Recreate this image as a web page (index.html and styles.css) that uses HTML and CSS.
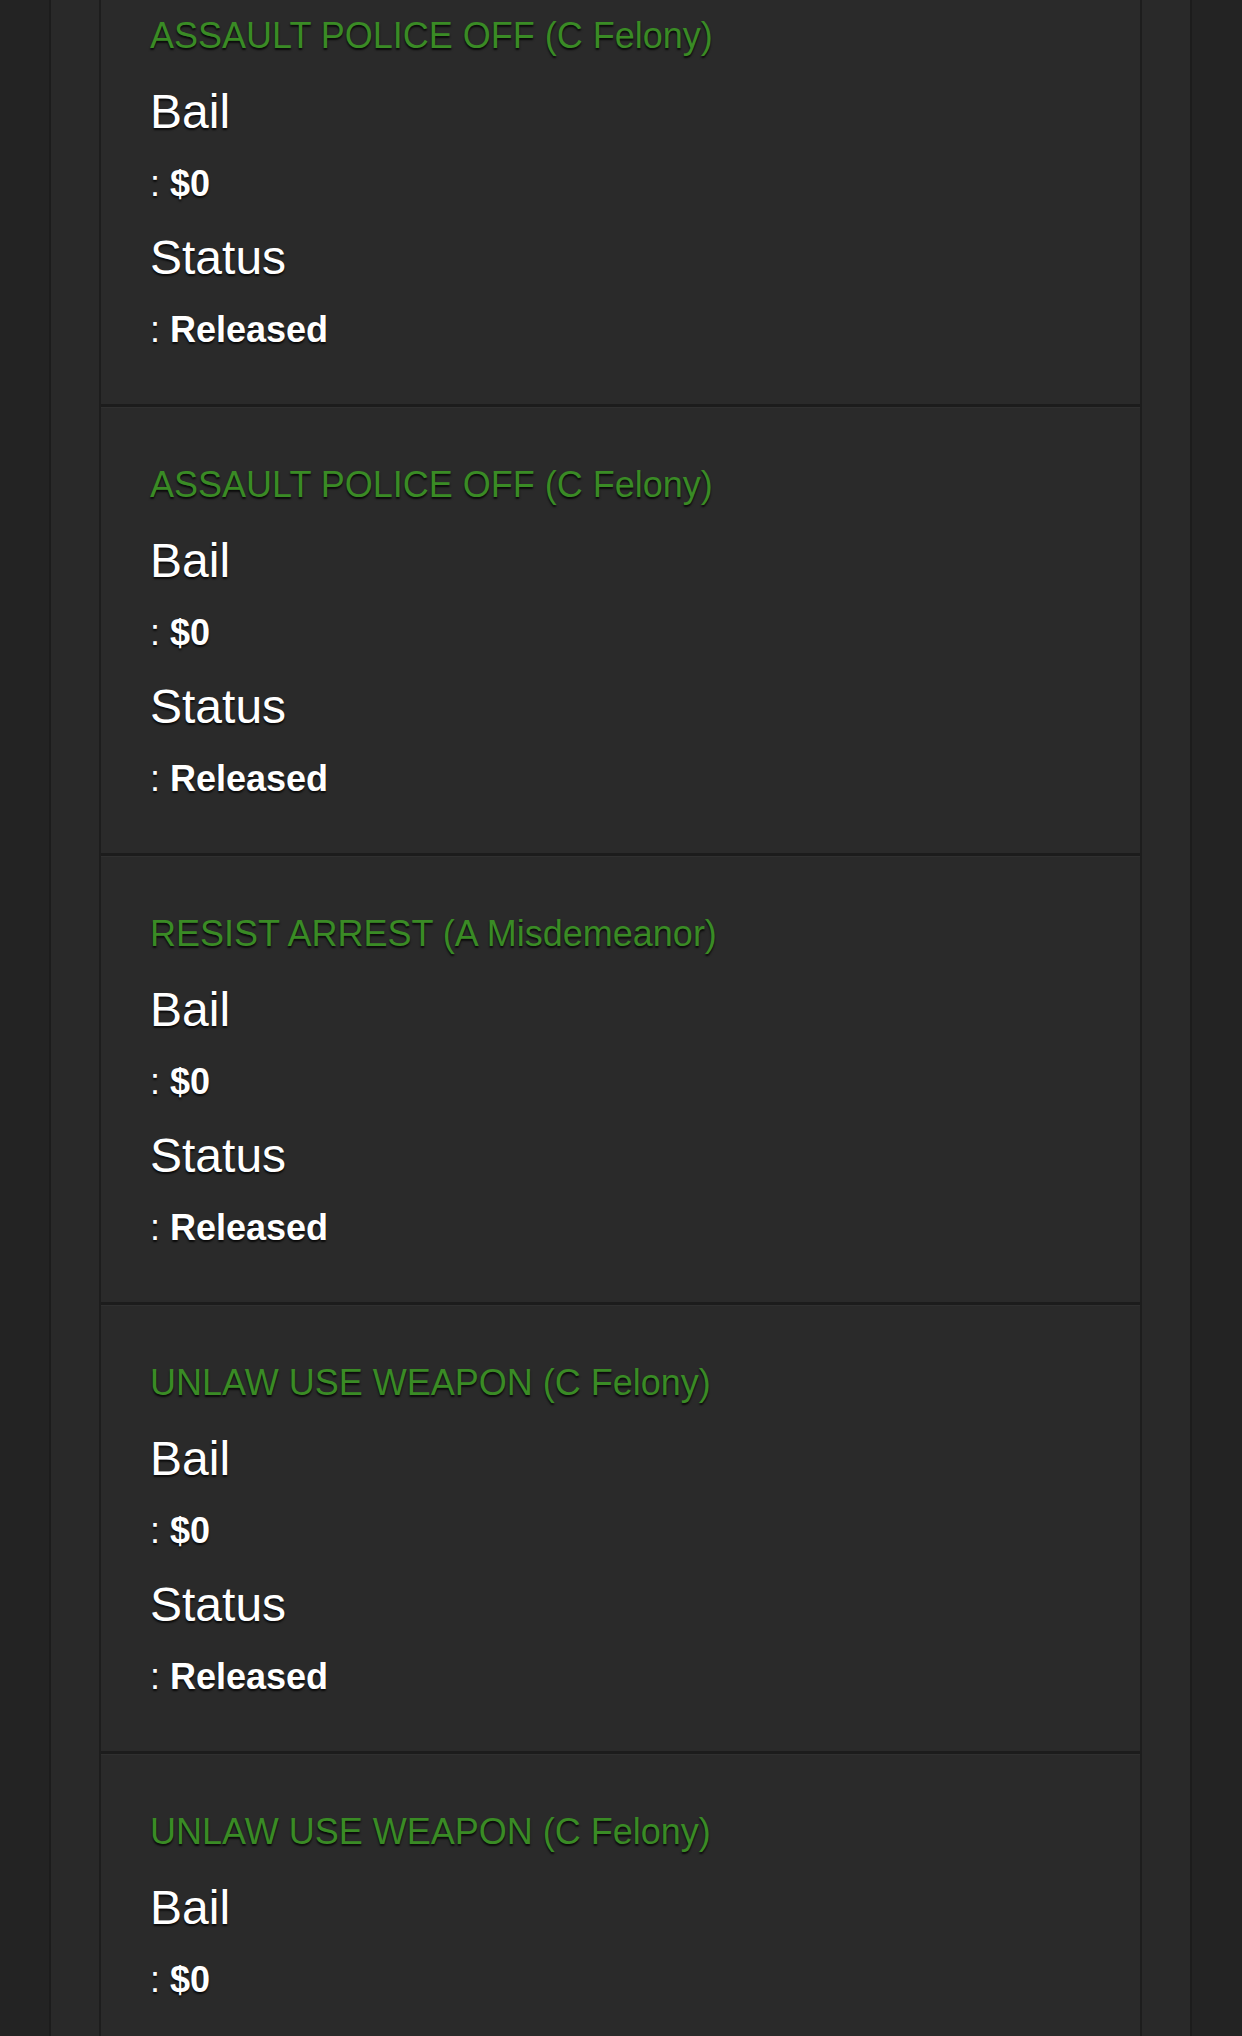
FILE: index.html
```html
<!DOCTYPE html>
<html lang="en">
<head>
<meta charset="utf-8">
<title>Charges</title>
<link rel="stylesheet" href="styles.css">
</head>
<body>
<div class="page">
  <div class="panel">
    <div class="list">
      <section class="charge">
        <p class="charge-title">ASSAULT POLICE OFF (C Felony)</p>
        <h3 class="label">Bail</h3>
        <p class="value">: <b>$0</b></p>
        <h3 class="label">Status</h3>
        <p class="value">: <b>Released</b></p>
      </section>
      <section class="charge">
        <p class="charge-title">ASSAULT POLICE OFF (C Felony)</p>
        <h3 class="label">Bail</h3>
        <p class="value">: <b>$0</b></p>
        <h3 class="label">Status</h3>
        <p class="value">: <b>Released</b></p>
      </section>
      <section class="charge">
        <p class="charge-title">RESIST ARREST (A Misdemeanor)</p>
        <h3 class="label">Bail</h3>
        <p class="value">: <b>$0</b></p>
        <h3 class="label">Status</h3>
        <p class="value">: <b>Released</b></p>
      </section>
      <section class="charge">
        <p class="charge-title">UNLAW USE WEAPON (C Felony)</p>
        <h3 class="label">Bail</h3>
        <p class="value">: <b>$0</b></p>
        <h3 class="label">Status</h3>
        <p class="value">: <b>Released</b></p>
      </section>
      <section class="charge">
        <p class="charge-title">UNLAW USE WEAPON (C Felony)</p>
        <h3 class="label">Bail</h3>
        <p class="value">: <b>$0</b></p>
      </section>
    </div>
  </div>
</div>
</body>
</html>
```
FILE: styles.css
```css
html, body {
  margin: 0;
  padding: 0;
  background: #232323;
  height: 100%;
  overflow: hidden;
}
body {
  font-family: "Liberation Sans", Arial, sans-serif;
  color: #ffffff;
}
.page {
  padding: 0 50px 0 49px;
  min-height: 100%;
  box-sizing: border-box;
}
.panel {
  background: #292929;
  border-left: 2px solid #1c1c1c;
  border-right: 2px solid #1c1c1c;
  padding: 0 48px 0 48px;
  min-height: 2036px;
}
.list {
  background: #2a2a2a;
  border-left: 2px solid #1d1d1d;
  border-right: 2px solid #1d1d1d;
  margin-top: -42px;
  min-height: 2100px;
}
.charge {
  padding: 37px 48px 37px 49px;
  border-bottom: 3px solid #1c1c1c;
  box-shadow: inset 0 1px 0 #303030;
}
.charge-title {
  margin: 0;
  font-size: 36px;
  line-height: 82px;
  color: #3a8b25;
  text-shadow: 0 2px 2px rgba(0, 0, 0, 0.8);
}
.label {
  margin: 0;
  font-size: 48px;
  font-weight: normal;
  line-height: 70px;
  text-shadow: 0 2px 2px rgba(0, 0, 0, 0.8);
}
.value + .label {
  margin-top: 2px;
}
.value {
  margin: 0;
  font-size: 36px;
  line-height: 74px;
  text-shadow: 0 2px 2px rgba(0, 0, 0, 0.8);
}
.value b {
  font-weight: bold;
}
```
